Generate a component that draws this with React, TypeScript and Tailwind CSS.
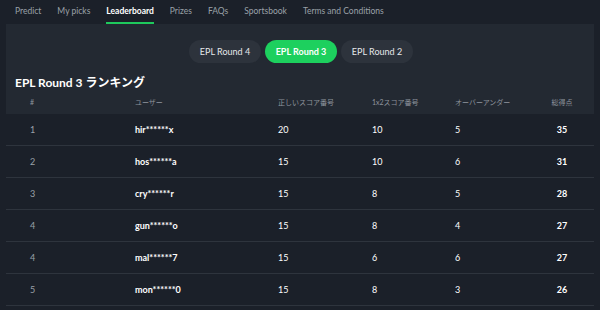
import React from "react";

const navItems = ["Predict", "My picks", "Leaderboard", "Prizes", "FAQs", "Sportsbook", "Terms and Conditions"];
const rounds = ["EPL Round 4", "EPL Round 3", "EPL Round 2"];

const rows = [
  { rank: 1, user: "hir******x", correct: 20, oneXTwo: 10, overUnder: 5, total: 35 },
  { rank: 2, user: "hos******a", correct: 15, oneXTwo: 10, overUnder: 6, total: 31 },
  { rank: 3, user: "cry******r", correct: 15, oneXTwo: 8, overUnder: 5, total: 28 },
  { rank: 4, user: "gun******o", correct: 15, oneXTwo: 8, overUnder: 4, total: 27 },
  { rank: 4, user: "mal******7", correct: 15, oneXTwo: 6, overUnder: 6, total: 27 },
  { rank: 5, user: "mon******0", correct: 15, oneXTwo: 8, overUnder: 3, total: 26 },
];

const cols = "grid grid-cols-[105px_143px_94px_83px_83px_48px] pl-6";

export default function App() {
  return (
    <div
      className="w-[600px] h-[310px] overflow-hidden bg-[#1b2029] text-white"
      style={{ fontFamily: "Lato, 'Noto Sans CJK JP', sans-serif" }}
    >
      {/* Top nav */}
      <nav className="flex h-6 items-stretch gap-4 pl-[15px] text-[8.5px]">
        {navItems.map((item) => (
          <div
            key={item}
            className={`flex items-center border-b-2 pt-[1px] ${
              item === "Leaderboard"
                ? "border-[#1ec95c] font-bold text-white"
                : "border-transparent text-[#9aa0a8]"
            }`}
          >
            {item}
          </div>
        ))}
      </nav>

      <div className="mx-[6px]">
        {/* Panel */}
        <div className="bg-[#232932]">
          <div className="flex justify-center gap-1 pt-4 pl-[2px]">
            {rounds.map((r) => (
              <div
                key={r}
                className={`flex h-[23px] w-[72px] items-center justify-center rounded-full text-[9px] ${
                  r === "EPL Round 3"
                    ? "bg-[#1dd05e] font-bold text-white"
                    : "bg-[#2d333c] text-[#e5e7ea]"
                }`}
              >
                {r}
              </div>
            ))}
          </div>
          <h2 className="mt-[12px] h-4 pl-[9px] text-[12px] font-bold leading-4">EPL Round 3 ランキング</h2>
          <div className={`${cols} h-[23px] items-center text-[7px] text-[#8f959e]`}>
            <div>#</div>
            <div>ユーザー</div>
            <div>正しいスコア番号</div>
            <div>1x2スコア番号</div>
            <div>オーバーアンダー</div>
            <div className="text-center">総得点</div>
          </div>
        </div>

        {/* Rows */}
        {rows.map((row, i) => (
          <div
            key={i}
            className={`${cols} h-[32px] items-center border-b border-[#2e343d] text-[9px] font-bold`}
          >
            <div className="font-normal text-[#9aa0a8]">{row.rank}</div>
            <div>{row.user}</div>
            <div className="font-normal">{row.correct}</div>
            <div className="font-normal">{row.oneXTwo}</div>
            <div className="font-normal">{row.overUnder}</div>
            <div className="text-center">{row.total}</div>
          </div>
        ))}
      </div>
    </div>
  );
}
